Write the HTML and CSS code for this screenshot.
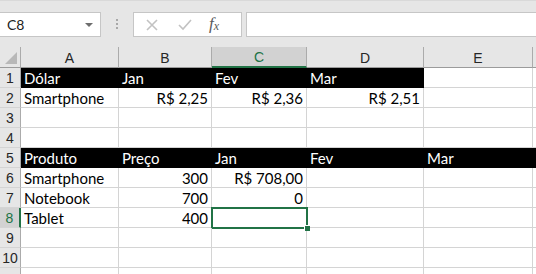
FILE: index.html
```html
<!DOCTYPE html>
<html lang="pt-BR">
<head>
  <meta charset="UTF-8">
  <title>Planilha</title>
  <link rel="stylesheet" href="styles.css">
</head>
<body>
  <div class="toolbar">
    <div class="namebox">
      <span>C8</span>
      <svg class="caret" viewBox="0 0 8 4"><path d="M0 0h8L4 4z"/></svg>
    </div>
    <div class="grip"><i></i><i></i><i></i></div>
    <div class="fxbuttons">
      <svg class="btn" viewBox="0 0 12 12"><path d="M1 1l10 10M11 1L1 11"/></svg>
      <svg class="btn" viewBox="0 0 14 12"><path d="M1 6l4 4 8-9"/></svg>
      <span class="fx">f<sub>x</sub></span>
    </div>
    <div class="formula"></div>
  </div>

  <div class="sheet">
    <div class="corner"><svg viewBox="0 0 12 12"><path d="M12 0v12H0z"/></svg></div>
    <div class="colhead">A</div>
    <div class="colhead">B</div>
    <div class="colhead active">C</div>
    <div class="colhead">D</div>
    <div class="colhead">E</div>
    <div class="colhead last"></div>

    <div class="rowhead">1</div>
    <div class="cell dark">Dólar</div>
    <div class="cell dark">Jan</div>
    <div class="cell dark">Fev</div>
    <div class="cell dark">Mar</div>
    <div class="cell"></div>
    <div class="cell"></div>

    <div class="rowhead">2</div>
    <div class="cell">Smartphone</div>
    <div class="cell num">R$ 2,25</div>
    <div class="cell num">R$ 2,36</div>
    <div class="cell num">R$ 2,51</div>
    <div class="cell"></div>
    <div class="cell"></div>

    <div class="rowhead">3</div>
    <div class="cell"></div><div class="cell"></div><div class="cell"></div><div class="cell"></div><div class="cell"></div><div class="cell"></div>

    <div class="rowhead">4</div>
    <div class="cell"></div><div class="cell"></div><div class="cell"></div><div class="cell"></div><div class="cell"></div><div class="cell"></div>

    <div class="rowhead">5</div>
    <div class="cell dark">Produto</div>
    <div class="cell dark">Preço</div>
    <div class="cell dark">Jan</div>
    <div class="cell dark">Fev</div>
    <div class="cell dark">Mar</div>
    <div class="cell dark"></div>

    <div class="rowhead">6</div>
    <div class="cell">Smartphone</div>
    <div class="cell num">300</div>
    <div class="cell num">R$ 708,00</div>
    <div class="cell"></div><div class="cell"></div><div class="cell"></div>

    <div class="rowhead">7</div>
    <div class="cell">Notebook</div>
    <div class="cell num">700</div>
    <div class="cell num">0</div>
    <div class="cell"></div><div class="cell"></div><div class="cell"></div>

    <div class="rowhead active">8</div>
    <div class="cell">Tablet</div>
    <div class="cell num">400</div>
    <div class="cell selected"><span class="handle"></span></div>
    <div class="cell"></div><div class="cell"></div><div class="cell"></div>

    <div class="rowhead">9</div>
    <div class="cell"></div><div class="cell"></div><div class="cell"></div><div class="cell"></div><div class="cell"></div><div class="cell"></div>

    <div class="rowhead">10</div>
    <div class="cell"></div><div class="cell"></div><div class="cell"></div><div class="cell"></div><div class="cell"></div><div class="cell"></div>

    <div class="rowhead"></div>
    <div class="cell"></div><div class="cell"></div><div class="cell"></div><div class="cell"></div><div class="cell"></div><div class="cell"></div>
  </div>
</body>
</html>
```

FILE: styles.css
```css
body {
  margin: 0;
  font-family: "Lato", "Liberation Sans", sans-serif;
  font-size: 15px;
  background: #fff;
  overflow: hidden;
}
.toolbar {
  display: flex;
  align-items: flex-start;
  height: 47px;
  box-sizing: border-box;
  padding-top: 12px;
  background: #e6e6e6;
  border-top: 1px solid #d9d9d9;
}
.namebox {
  width: 101px;
  height: 25px;
  box-sizing: border-box;
  margin-top: -1px;
  background: #fff;
  border: 1px solid #c6c6c6;
  border-left: none;
  display: flex;
  align-items: center;
  justify-content: space-between;
  padding: 0 7px 0 7px;
  font-family: "Lato", "Liberation Sans", sans-serif;
  font-size: 14px;
  color: #222;
}
.caret {
  width: 8px;
  height: 4px;
  fill: #6d6d6d;
}
.grip {
  width: 32px;
  display: flex;
  flex-direction: column;
  align-items: center;
  gap: 2px;
  padding-top: 6px;
}
.grip i {
  width: 2px;
  height: 2px;
  background: #a8a8a8;
}
.fxbuttons {
  width: 109px;
  height: 25px;
  margin-top: -1px;
  box-sizing: border-box;
  background: #fff;
  border: 1px solid #c6c6c6;
  display: flex;
  align-items: center;
  padding-left: 12px;
  gap: 20px;
}
.btn {
  width: 12px;
  height: 12px;
  fill: none;
  stroke: #c2c2c2;
  stroke-width: 1.6;
}
.btn + .btn {
  width: 14px;
}
.fx {
  font-family: "Liberation Serif", serif;
  font-style: italic;
  font-size: 17px;
  color: #5a5a5a;
  margin-left: -3px;
  line-height: 20px;
}
.fx sub {
  font-size: 12px;
  vertical-align: -1px;
}
.formula {
  flex: 1;
  height: 25px;
  margin-top: -1px;
  margin-left: 4px;
  box-sizing: border-box;
  background: #fff;
  border: 1px solid #c6c6c6;
  border-right: none;
}
.sheet {
  display: grid;
  grid-template-columns: 21px 98px 93px 95px 117px 109px 1fr;
  grid-template-rows: 21px repeat(11, 20px);
}
.corner {
  background: #e6e6e6;
  border-right: 1px solid #ababab;
  border-bottom: 1px solid #9b9b9b;
  display: flex;
  align-items: flex-end;
  justify-content: flex-end;
  padding: 0 3px 3px 0;
}
.corner svg {
  width: 12px;
  height: 12px;
  fill: #b8b8b8;
}
.colhead {
  background: #e6e6e6;
  border-bottom: 1px solid #9b9b9b;
  border-right: 1px solid #ababab;
  font-family: "Liberation Sans", sans-serif;
  font-size: 14px;
  color: #262626;
  text-align: center;
  line-height: 22px;
}
.colhead.active {
  background: #d2d2d2;
  color: #217346;
  border-bottom: 2px solid #217346;
  line-height: 21px;
}
.colhead.last {
  border-right: none;
}
.rowhead {
  background: #e6e6e6;
  border-right: 1px solid #ababab;
  border-bottom: 1px solid #d4d4d4;
  font-family: "Liberation Sans", sans-serif;
  font-size: 14px;
  color: #262626;
  text-align: center;
  line-height: 21px;
}
.rowhead.active {
  background: #d2d2d2;
  color: #217346;
  border-right: 2px solid #217346;
}
.cell {
  border-right: 1px solid #d4d4d4;
  border-bottom: 1px solid #d4d4d4;
  padding: 0 3px;
  line-height: 20px;
  color: #000;
  white-space: nowrap;
  overflow: hidden;
  position: relative;
}
.cell.dark {
  background: #000;
  color: #fff;
  border-right-color: #000;
  border-bottom-color: #000;
}
.cell.num {
  text-align: right;
}
.cell.selected {
  overflow: visible;
  border: none;
}
.cell.selected::before {
  content: "";
  position: absolute;
  left: -1px;
  top: -1px;
  right: -1px;
  bottom: -1px;
  border: 2px solid #217346;
}
.handle {
  position: absolute;
  right: -3px;
  bottom: -3px;
  width: 5px;
  height: 5px;
  background: #217346;
  border: 1px solid #fff;
  border-right: none;
  border-bottom: none;
  z-index: 2;
}
```
